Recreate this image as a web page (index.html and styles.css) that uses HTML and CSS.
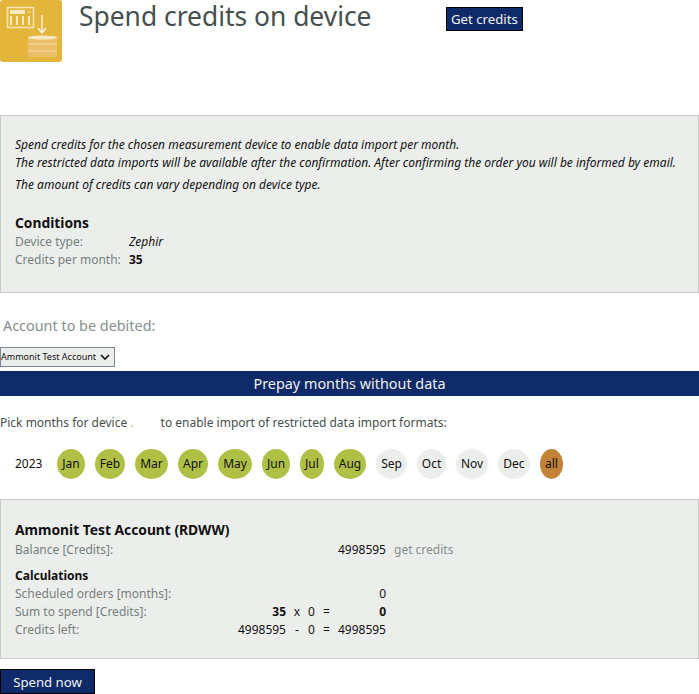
FILE: index.html
```html
<!DOCTYPE html>
<html lang="en">
<head>
<meta charset="utf-8">
<title>Spend credits on device</title>
<link rel="stylesheet" href="styles.css">
</head>
<body>
<header class="head">
  <div class="logo">
    <svg width="62" height="62" viewBox="0 0 62 62">
      <rect width="62" height="62" rx="3" fill="#e3b53b"/>
      <rect x="7.500" y="7.500" width="26" height="20" fill="none" stroke="#f5e3b0" stroke-width="1.600"/>
      <rect x="10" y="10" width="15" height="4" fill="#f7e9c2"/>
      <path d="M11 16v9M17 16v9M23 16v9M29 16v9" stroke="#f7e9c2" stroke-width="2"/>
      <path d="M27 12h4" stroke="#f5e3b0" stroke-width="1"/>
      <path d="M42 15v17M38 28l4 5 4-5" fill="none" stroke="#faf0d4" stroke-width="1.500"/>
      <rect x="28" y="37" width="29" height="20" rx="1" fill="#ebbf68"/>
      <ellipse cx="42.500" cy="37.500" rx="14.500" ry="2" fill="#f7e9c2"/>
      <path d="M28 44h29M28 51h29" stroke="#f5dda3" stroke-width="1"/>
    </svg>
  </div>
  <h1 class="title">Spend credits on device</h1>
  <a class="btn get">Get credits</a>
</header>

<section class="panel info">
  <p class="line">Spend credits for the chosen measurement device to enable data import per month.</p>
  <p class="line">The restricted data imports will be available after the confirmation. After confirming the order you will be informed by email.</p>
  <p class="line third">The amount of credits can vary depending on device type.</p>
  <h2 class="sub">Conditions</h2>
  <div class="cond"><span class="lbl">Device type:</span><em>Zephir</em></div>
  <div class="cond"><span class="lbl">Credits per month:</span><strong>35</strong></div>
</section>

<h3 class="debit">Account to be debited:</h3>
<div class="selwrap">
  <div class="select">Ammonit Test Account
    <svg width="10" height="7" viewBox="0 0 10 7"><path d="M1 1l4 4 4-4" fill="none" stroke="#111" stroke-width="1.600"/></svg>
  </div>
</div>
<div class="bar">Prepay months without data</div>
<p class="pick">Pick months for device <span class="dot">.</span><span class="gap"></span>to enable import of restricted data import formats:</p>

<div class="months">
  <span class="year">2023</span>
  <span class="m on w27">Jan</span>
  <span class="m on w30">Feb</span>
  <span class="m on w33">Mar</span>
  <span class="m on w30">Apr</span>
  <span class="m on w34">May</span>
  <span class="m on w27">Jun</span>
  <span class="m on w24">Jul</span>
  <span class="m on w32">Aug</span>
  <span class="m w31">Sep</span>
  <span class="m w29">Oct</span>
  <span class="m w32">Nov</span>
  <span class="m w32">Dec</span>
  <span class="m all">all</span>
</div>

<section class="panel acct">
  <h2 class="sub name">Ammonit Test Account (RDWW)</h2>
  <div class="row bal"><span class="lbl c1">Balance [Credits]:</span><span class="c2"></span><span class="c3"></span><span class="c4"></span><span class="c5">4998595</span><span class="lnk">get credits</span></div>
  <h4 class="calc">Calculations</h4>
  <div class="row"><span class="lbl c1">Scheduled orders [months]:</span><span class="c2"></span><span class="c3"></span><span class="c4"></span><span class="c5">0</span></div>
  <div class="row"><span class="lbl c1">Sum to spend [Credits]:</span><strong class="c2">35</strong><span class="c3">x</span><span class="c4 eq"><span>0</span><span>=</span></span><strong class="c5">0</strong></div>
  <div class="row"><span class="lbl c1">Credits left:</span><span class="c2">4998595</span><span class="c3">-</span><span class="c4 eq"><span>0</span><span>=</span></span><span class="c5">4998595</span></div>
</section>

<a class="btn spend">Spend now</a>
</body>
</html>
```
FILE: styles.css
```css
* { box-sizing: border-box; }
html, body { margin: 0; padding: 0; }
body { width: 699px; height: 694px; overflow: hidden; background: #fff; font-family: "Noto Sans", sans-serif; font-size: 12px; color: #111; line-height: 18px; }
.head { display: flex; align-items: flex-start; height: 115px; }
.logo { width: 62px; height: 62px; }
.logo svg { display: block; }
.title { margin: 0 0 0 17px; width: 367px; font-size: 26.400px; line-height: 32px; font-weight: 400; color: #46504f; }
.btn { display: inline-block; background: #0f2a68; color: #f0f2f0; border: 1px solid #000; font-size: 13.200px; }
.get { margin-top: 7px; height: 24px; line-height: 22px; padding: 0 4px; }
.panel { background: #eceeec; border: 1px solid #c9cbc9; }
.info { height: 178px; padding: 20px 14px 0; }
.line { margin: 0; font-style: italic; line-height: 18px; }
.third { margin-top: 4px; }
.sub { margin: 19px 0 0; font-size: 13.800px; line-height: 20px; font-weight: 700; }
.lbl { color: #757f7e; }
.cond { display: flex; line-height: 18px; }
.cond .lbl { width: 114px; }
.debit { margin: 23px 0 0 3px; font-size: 14.400px; line-height: 20px; font-weight: 400; color: #858f8e; }
.selwrap { margin-top: 11px; height: 20px; }
.select { display: inline-flex; align-items: center; gap: 4px; width: 115px; height: 20px; background: #eceeec; border: 1px solid #7c8894; font-size: 9px; white-space: nowrap; }
.bar { margin-top: 4px; height: 25px; background: #0f2a68; color: #eef0ee; text-align: center; font-size: 14.400px; line-height: 25px; }
.pick { margin: 18px 0 0; color: #46504f; line-height: 18px; }
.dot { color: #d9b36a; }
.gap { display: inline-block; width: 27px; }
.months { display: flex; align-items: center; gap: 10px; margin-top: 17px; padding-left: 15px; height: 30px; }
.year { width: 32px; }
.m { display: block; height: 30px; border-radius: 50%; background: #eceeec; text-align: center; line-height: 30px; }
.on { background: #b0c044; }
.all { width: 23px; background: #c48138; }
.w24 { width: 24px; } .w27 { width: 28px; } .w29 { width: 29px; } .w30 { width: 30px; } .w31 { width: 31px; } .w32 { width: 32px; } .w33 { width: 33px; } .w34 { width: 34px; }
.acct { margin-top: 20px; height: 160px; padding: 20px 14px 0; }
.name { margin: 0; }
.row { display: flex; height: 18px; line-height: 18px; }
.bal { margin-top: 1px; }
.c1 { width: 190px; }
.c2 { width: 81px; text-align: right; }
.c3 { width: 22px; text-align: center; }
.c4 { width: 29px; white-space: nowrap; }
.eq { display: flex; gap: 8px; }
.c5 { width: 49px; text-align: right; }
.lnk { margin-left: 8px; color: #858f8e; }
.calc { margin: 8px 0 0; font-size: 12px; line-height: 18px; font-weight: 700; }
.spend { margin-top: 10px; width: 95px; height: 25px; text-align: center; line-height: 25px; }
```
